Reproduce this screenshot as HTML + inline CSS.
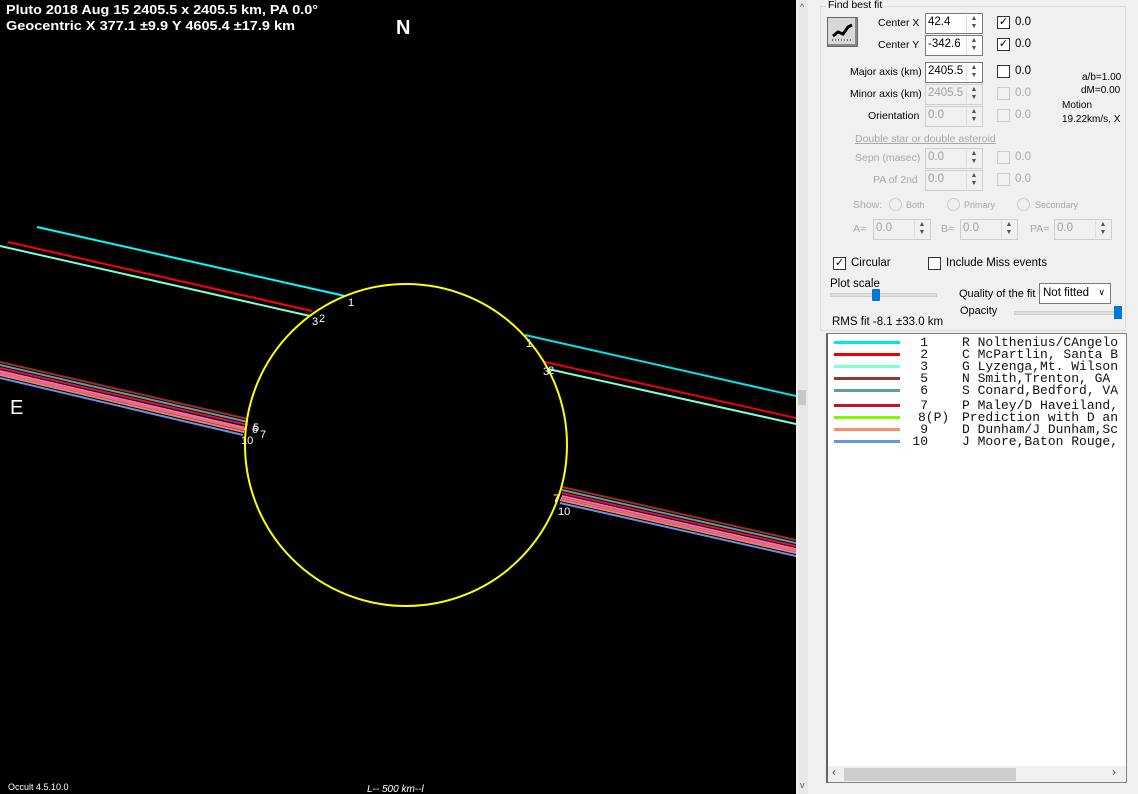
<!DOCTYPE html>
<html><head><meta charset="utf-8"><style>
*{margin:0;padding:0;box-sizing:border-box}
body{width:1138px;height:794px;overflow:hidden;background:#f0f0f0;font-family:"Liberation Sans",sans-serif;font-size:10.5px;position:relative}
#plot{position:absolute;left:0;top:0;width:796px;height:794px;background:#000}
.a{position:absolute;white-space:nowrap}
.dis{color:#a8a8a8}
.tb{position:absolute;height:21px;border:1px solid #7a7a7a;background:#fff;font-size:11.5px;padding:2px 0 0 2px}
.tb.d{border-color:#cfcfcf;background:#f0f0f0;color:#a0a0a0}
.sp{position:absolute;right:1px;top:1px;width:15px;height:17px;border-left:1px solid #ddd;font-size:7px;text-align:center;line-height:8px;color:#555}
.cb{position:absolute;width:13px;height:13px;border:1px solid #333;background:#fff;font-size:11px;line-height:11px;text-align:center}
.cb.d{border-color:#ccc;background:#f0f0f0}
.rb{position:absolute;width:13px;height:13px;border:1px solid #ccc;border-radius:50%}
#list{position:absolute;left:826px;top:333px;width:301px;height:450px;background:#fff;border:1px solid #828282;border-left:2px solid #646464;font-family:"Liberation Mono",monospace;font-size:13px;overflow:hidden;color:#111}
.row{position:absolute;left:0;width:300px;height:13px;white-space:pre;line-height:13px}
.ln{position:absolute;left:6px;top:5px;width:66px;height:3px}
.num{position:absolute;right:200px;top:0}
.nm{position:absolute;left:134px;top:0}
.s{font-size:11.5px}
</style></head><body>
<div id="plot">
<svg width="796" height="794" style="position:absolute;left:0;top:0">
<g stroke-width="2" fill="none">
<line x1="37" y1="227" x2="345" y2="296" stroke="#00ffff"/>
<line x1="8" y1="242" x2="312" y2="311" stroke="#ff0000"/>
<line x1="0" y1="246" x2="310" y2="316" stroke="#7fffd4"/>
<line x1="525" y1="335" x2="796" y2="396" stroke="#00e5ee"/>
<line x1="545" y1="362" x2="796" y2="418" stroke="#ee0000"/>
<line x1="548" y1="369" x2="796" y2="424" stroke="#7fffd4"/>
<line x1="0" y1="362" x2="248" y2="419" stroke="#a52a2a"/>
<line x1="0" y1="365" x2="248" y2="422" stroke="#5f9ea0"/>
<line x1="0" y1="368" x2="248" y2="425" stroke="#dc143c"/>
<line x1="0" y1="371" x2="246" y2="428" stroke="#ff69b4"/>
<line x1="0" y1="373" x2="246" y2="430" stroke="#db7093"/>
<line x1="0" y1="375" x2="244" y2="432" stroke="#ff7f50"/>
<line x1="0" y1="378" x2="243" y2="435" stroke="#6495ed"/>
<line x1="562" y1="487" x2="796" y2="540" stroke="#a52a2a"/>
<line x1="562" y1="490" x2="796" y2="543" stroke="#5f9ea0"/>
<line x1="562" y1="493" x2="796" y2="546" stroke="#dc143c"/>
<line x1="562" y1="496" x2="796" y2="549" stroke="#ff69b4"/>
<line x1="561" y1="498" x2="796" y2="551" stroke="#db7093"/>
<line x1="560" y1="500" x2="796" y2="553" stroke="#ff7f50"/>
<line x1="560" y1="503" x2="796" y2="556" stroke="#6495ed"/>
<circle cx="406" cy="445" r="161" stroke="#ffff00"/>
</g>
<g fill="#fff" font-family="Liberation Sans" font-size="11">
<text x="348" y="306">1</text><text x="312" y="325">3</text><text x="319" y="322">2</text>
<text x="526" y="347">1</text><text x="543" y="375">3</text><text x="548" y="374">2</text>
<text x="253" y="431">5</text><text x="252" y="433">6</text><text x="260" y="438">7</text><text x="241" y="444">10</text>
<text x="553" y="502">7</text><text x="558" y="515">10</text>
</g>
<g fill="#fff" font-family="Liberation Sans" font-weight="bold">
<text x="6" y="14" font-size="13" textLength="312" lengthAdjust="spacingAndGlyphs">Pluto 2018 Aug 15  2405.5 x 2405.5 km, PA 0.0°</text>
<text x="6" y="30" font-size="13" textLength="289" lengthAdjust="spacingAndGlyphs">Geocentric X 377.1 ±9.9 Y 4605.4 ±17.9 km</text>
<text x="396" y="34" font-size="20">N</text>
<text x="10" y="414" font-size="20" font-weight="normal">E</text>
</g>
<text x="8" y="790" fill="#fff" font-size="9" font-family="Liberation Sans">Occult 4.5.10.0</text>
<text x="367" y="792" fill="#fff" font-size="10" font-style="italic" font-family="Liberation Sans">L-- 500 km--l</text>
</svg>
</div>
<div class="a" style="left:798px;top:0;width:10px;height:794px;background:#e8e8e8"></div>
<div class="a" style="left:798px;top:390px;width:8px;height:15px;background:#c8c8c8"></div>
<div class="a" style="left:800px;top:2px;font-size:9px;color:#555">^</div>
<div class="a" style="left:820px;top:6px;width:306px;height:325px;border:1px solid #dcdcdc"></div>
<div class="a" style="left:826px;top:-1px;background:#f0f0f0;padding:0 2px">Find best fit</div>
<div class="a" style="left:827px;top:17px;width:31px;height:30px;background:#d8d8d8;border:1px solid #666;box-shadow:inset -2px -2px #888"><svg width="28" height="26"><polyline points="5,18 10,14 15,16 20,9 24,7" stroke="#000" stroke-width="3" fill="none"/><line x1="4" y1="22" x2="25" y2="22" stroke="#000" stroke-dasharray="1,2"/></svg></div>
<div class="a" style="left:878px;top:17px">Center X</div>
<div class="a" style="left:878px;top:39px">Center Y</div>
<div class="a" style="left:850px;top:66px">Major axis (km)</div>
<div class="a" style="left:850px;top:88px">Minor axis (km)</div>
<div class="a" style="left:868px;top:110px">Orientation</div>
<div class="tb" style="left:925px;top:13px;width:58px">42.4<div class="sp">▲<br>▼</div></div>
<div class="tb" style="left:925px;top:35px;width:58px">-342.6<div class="sp">▲<br>▼</div></div>
<div class="tb" style="left:925px;top:62px;width:58px">2405.5<div class="sp">▲<br>▼</div></div>
<div class="tb d" style="left:925px;top:84px;width:58px">2405.5<div class="sp">▲<br>▼</div></div>
<div class="tb d" style="left:925px;top:106px;width:58px">0.0<div class="sp">▲<br>▼</div></div>
<div class="cb" style="left:997px;top:16px">✓</div><div class="a s" style="left:1015px;top:16px">0.0</div>
<div class="cb" style="left:997px;top:38px">✓</div><div class="a s" style="left:1015px;top:38px">0.0</div>
<div class="cb" style="left:997px;top:65px"></div><div class="a s" style="left:1015px;top:65px">0.0</div>
<div class="cb d" style="left:997px;top:87px"></div><div class="a dis s" style="left:1015px;top:87px">0.0</div>
<div class="cb d" style="left:997px;top:109px"></div><div class="a dis s" style="left:1015px;top:109px">0.0</div>
<div class="a" style="left:1082px;top:72px;font-size:10px">a/b=1.00</div>
<div class="a" style="left:1081px;top:85px;font-size:10px">dM=0.00</div>
<div class="a" style="left:1062px;top:100px;font-size:10px">Motion</div>
<div class="a" style="left:1062px;top:114px;font-size:10px">19.22km/s, X</div>
<div class="a dis" style="left:855px;top:133px;text-decoration:underline">Double star  or  double asteroid</div>
<div class="a dis" style="left:855px;top:152px">Sepn (masec)</div>
<div class="a dis" style="left:873px;top:174px">PA of 2nd</div>
<div class="tb d" style="left:925px;top:148px;width:58px">0.0<div class="sp">▲<br>▼</div></div>
<div class="tb d" style="left:925px;top:170px;width:58px">0.0<div class="sp">▲<br>▼</div></div>
<div class="cb d" style="left:997px;top:151px"></div><div class="a dis s" style="left:1015px;top:151px">0.0</div>
<div class="cb d" style="left:997px;top:173px"></div><div class="a dis s" style="left:1015px;top:173px">0.0</div>
<div class="a dis" style="left:853px;top:199px">Show:</div>
<div class="rb" style="left:889px;top:198px"></div><div class="a dis" style="left:906px;top:200px;font-size:9px">Both</div>
<div class="rb" style="left:947px;top:198px"></div><div class="a dis" style="left:964px;top:200px;font-size:9px">Primary</div>
<div class="rb" style="left:1017px;top:198px"></div><div class="a dis" style="left:1035px;top:200px;font-size:9px">Secondary</div>
<div class="a dis" style="left:853px;top:223px">A=</div><div class="tb d" style="left:873px;top:219px;width:58px">0.0<div class="sp">▲<br>▼</div></div>
<div class="a dis" style="left:941px;top:223px">B=</div><div class="tb d" style="left:960px;top:219px;width:58px">0.0<div class="sp">▲<br>▼</div></div>
<div class="a dis" style="left:1030px;top:223px">PA=</div><div class="tb d" style="left:1054px;top:219px;width:58px">0.0<div class="sp">▲<br>▼</div></div>
<div class="cb" style="left:833px;top:257px">✓</div><div class="a s" style="left:851px;top:257px">Circular</div>
<div class="cb" style="left:928px;top:257px"></div><div class="a s" style="left:946px;top:257px">Include Miss events</div>
<div class="a s" style="left:830px;top:278px">Plot scale</div>
<div class="a" style="left:830px;top:293px;width:107px;height:4px;background:#e0e0e0;border:1px solid #ccc"></div>
<div class="a" style="left:872px;top:289px;width:8px;height:12px;background:#0078d7;border-radius:1px"></div>
<div class="a" style="left:959px;top:288px;font-size:11px">Quality of the fit</div>
<div class="a" style="left:1039px;top:283px;width:72px;height:21px;border:1px solid #7a7a7a;background:#fff;font-size:11.5px;padding:3px 3px">Not fitted <span style="position:absolute;right:5px;font-size:9px">∨</span></div>
<div class="a" style="left:960px;top:305px;font-size:11px">Opacity</div>
<div class="a" style="left:1014px;top:311px;width:106px;height:4px;background:#e0e0e0;border:1px solid #ccc"></div>
<div class="a" style="left:1114px;top:306px;width:8px;height:13px;background:#0078d7"></div>
<div class="a s" style="left:832px;top:316px">RMS fit -8.1 ±33.0 km</div>
<div id="list">
<div class="row" style="top:2px"><div class="ln" style="background:#00e5ee"></div><span class="num">1</span><span class="nm">R Nolthenius/CAngelo</span></div>
<div class="row" style="top:14px"><div class="ln" style="background:#e00"></div><span class="num">2</span><span class="nm">C McPartlin, Santa B</span></div>
<div class="row" style="top:26px"><div class="ln" style="background:#7fffd4"></div><span class="num">3</span><span class="nm">G Lyzenga,Mt. Wilson</span></div>
<div class="row" style="top:38px"><div class="ln" style="background:#8b3a3a"></div><span class="num">5</span><span class="nm">N Smith,Trenton, GA</span></div>
<div class="row" style="top:50px"><div class="ln" style="background:#5f9ea0"></div><span class="num">6</span><span class="nm">S Conard,Bedford, VA</span></div>
<div class="row" style="top:65px"><div class="ln" style="background:#c8102e"></div><span class="num">7</span><span class="nm">P Maley/D Haveiland,</span></div>
<div class="row" style="top:77px"><div class="ln" style="background:#7cfc00"></div><span class="num" style="right:auto;left:90px">8(P)</span><span class="nm">Prediction with D an</span></div>
<div class="row" style="top:89px"><div class="ln" style="background:#ff8c69"></div><span class="num">9</span><span class="nm">D Dunham/J Dunham,Sc</span></div>
<div class="row" style="top:101px"><div class="ln" style="background:#6495ed"></div><span class="num">10</span><span class="nm">J Moore,Baton Rouge,</span></div>
<div class="a" style="left:0;top:432px;width:299px;height:16px;background:#f0f0f0"></div>
<div class="a" style="left:16px;top:434px;width:172px;height:13px;background:#cdcdcd"></div>
<div class="a" style="left:4px;top:431px;font-family:'Liberation Sans';font-size:12px;color:#555">‹</div>
<div class="a" style="left:284px;top:431px;font-family:'Liberation Sans';font-size:12px;color:#555">›</div>
</div>
<div class="a" style="left:800px;top:780px;font-size:9px;color:#555">v</div>
</body></html>
